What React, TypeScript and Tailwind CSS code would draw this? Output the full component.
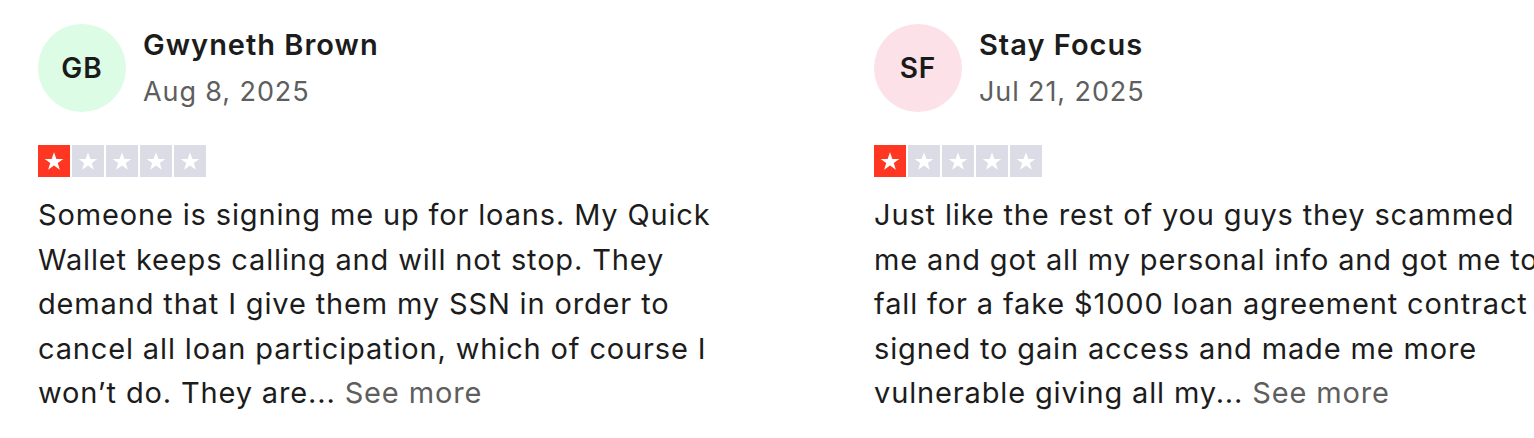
const reviews = [
  {
    initials: 'GB',
    name: 'Gwyneth Brown',
    date: 'Aug 8, 2025',
    avatar: 'bg-[#dcfce6]',
    rating: 1,
    text: 'Someone is signing me up for loans. My Quick Wallet keeps calling and will not stop. They demand that I give them my SSN in order to cancel all loan participation, which of course I won\u2019t do. They are...',
  },
  {
    initials: 'SF',
    name: 'Stay Focus',
    date: 'Jul 21, 2025',
    avatar: 'bg-[#fde1e9]',
    rating: 1,
    text: 'Just like the rest of you guys they scammed me and got all my personal info and got me to fall for a fake $1000 loan agreement contract signed to gain access and made me more vulnerable giving all my...',
  },
];

function Star({ filled }: { filled: boolean }) {
  return (
    <div className={`w-[32px] h-[32px] flex items-center justify-center ${filled ? 'bg-[#ff3722]' : 'bg-[#dcdce6]'}`}>
      <svg viewBox="0 0 24 24" className="w-[22px] h-[22px]">
        <path
          d="M12 2.5l2.6 7.2h7.6l-6.1 4.5 2.3 7.3L12 17l-6.4 4.5 2.3-7.3-6.1-4.5h7.6z"
          fill="#fff"
        />
      </svg>
    </div>
  );
}

export default function App() {
  return (
    <div
      className="w-[1534px] h-[438px] overflow-hidden bg-white"
      style={{ fontFamily: 'Inter, "Noto Sans", sans-serif' }}
    >
      <div className="flex gap-[156px] pl-[38px] pt-[24px]">
        {reviews.map((r) => (
          <div key={r.name} className="w-[680px] shrink-0">
            {/* Header */}
            <div className="flex items-center gap-[17px]">
              <div className={`w-[88px] h-[88px] rounded-full flex items-center justify-center ${r.avatar}`}>
                <span className="text-[28px] font-semibold text-[#1a1a1a] tracking-[1px]">{r.initials}</span>
              </div>
              <div>
                <div className="text-[29px] leading-[36px] font-semibold text-[#1c1c1c] tracking-[1px]">{r.name}</div>
                <div className="mt-[11px] text-[27px] leading-[36px] text-[#5e5e5e] tracking-[0.9px]">{r.date}</div>
              </div>
            </div>

            {/* Rating */}
            <div className="mt-[33px] flex gap-[2px]">
              {[1, 2, 3, 4, 5].map((i) => (
                <Star key={i} filled={i <= r.rating} />
              ))}
            </div>

            {/* Body */}
            <p className="mt-[16px] text-[29px] leading-[44.5px] text-[#1c1c1c] tracking-[0.85px]">
              {r.text} <span className="text-[#5e5e5e]">See more</span>
            </p>
          </div>
        ))}
      </div>
    </div>
  );
}
